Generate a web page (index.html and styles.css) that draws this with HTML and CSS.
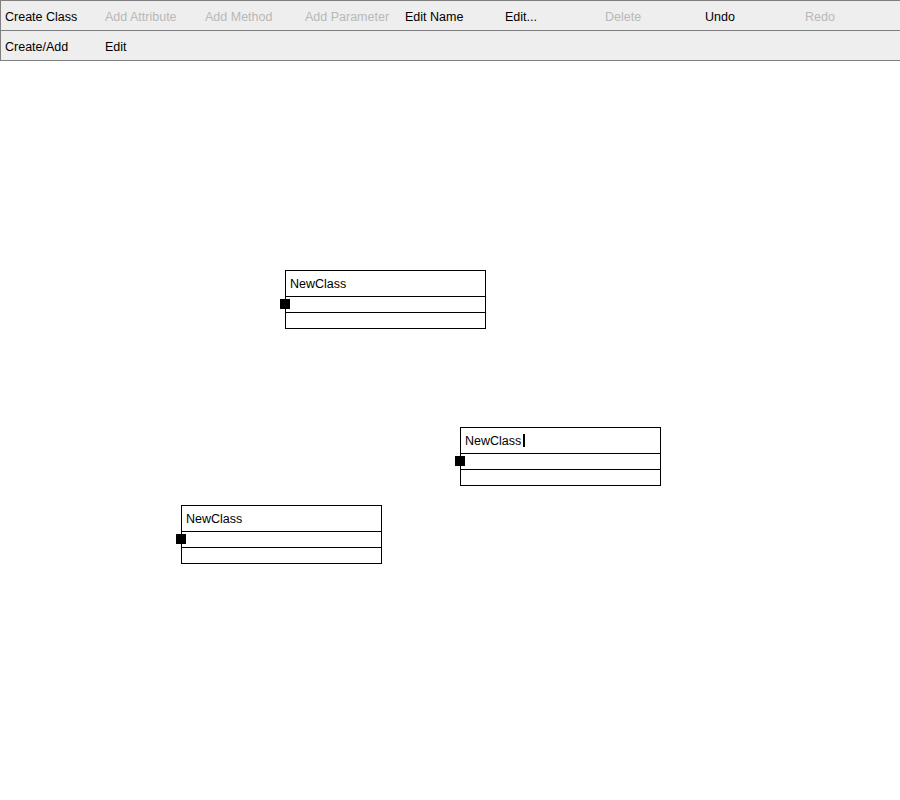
FILE: index.html
```html
<!DOCTYPE html>
<html>
<head>
<meta charset="utf-8">
<link rel="stylesheet" href="styles.css">
</head>
<body>
<div class="toolbar">
  <div class="row">
    <div class="btn">Create Class</div>
    <div class="btn disabled">Add Attribute</div>
    <div class="btn disabled">Add Method</div>
    <div class="btn disabled">Add Parameter</div>
    <div class="btn">Edit Name</div>
    <div class="btn">Edit...</div>
    <div class="btn disabled">Delete</div>
    <div class="btn">Undo</div>
    <div class="btn disabled">Redo</div>
  </div>
  <div class="row">
    <div class="btn">Create/Add</div>
    <div class="btn">Edit</div>
  </div>
</div>
<div class="canvas">
  <div class="cls c1">
    <div class="cls-name">NewClass</div>
    <div class="cls-attrs"></div>
    <div class="cls-methods"></div>
    <div class="handle"></div>
  </div>
  <div class="cls c2">
    <div class="cls-name">NewClass<span class="caret"></span></div>
    <div class="cls-attrs"></div>
    <div class="cls-methods"></div>
    <div class="handle"></div>
  </div>
  <div class="cls c3">
    <div class="cls-name">NewClass</div>
    <div class="cls-attrs"></div>
    <div class="cls-methods"></div>
    <div class="handle"></div>
  </div>
</div>
</body>
</html>
```
FILE: styles.css
```css
html, body {
  margin: 0;
  padding: 0;
  background: #ffffff;
}
body {
  font-family: "Liberation Sans", Arial, sans-serif;
  font-size: 12.5px;
  color: #000;
  width: 900px;
  height: 800px;
  overflow: hidden;
}
.toolbar {
  background: #eeeeee;
  border-top: 1px solid #7f7f7f;
  border-left: 1px solid #7f7f7f;
}
.row {
  display: flex;
  height: 29px;
  border-bottom: 1px solid #7f7f7f;
}
.btn {
  width: 100px;
  flex: none;
  box-sizing: border-box;
  padding-left: 4px;
  padding-top: 3px;
  line-height: 26px;
  white-space: nowrap;
}
.btn.disabled {
  color: #b8b8b8;
}
.canvas {
  position: relative;
  height: 739px;
}
.cls {
  position: absolute;
  width: 199px;
  border: 1px solid #000;
  background: #fff;
}
.c1 { left: 285px; top: 209px; }
.c2 { left: 460px; top: 366px; }
.c3 { left: 181px; top: 444px; }
.cls-name {
  height: 24px;
  padding-top: 1px;
  padding-left: 4px;
  line-height: 24px;
  border-bottom: 1px solid #000;
  white-space: nowrap;
}
.cls-attrs {
  height: 15px;
  border-bottom: 1px solid #000;
}
.cls-methods {
  height: 15px;
}
.handle {
  position: absolute;
  left: -6px;
  top: 28px;
  width: 10px;
  height: 10px;
  background: #000;
}
.caret {
  display: inline-block;
  width: 2px;
  height: 13px;
  background: #000;
  margin-left: 2px;
  vertical-align: -2px;
}
```
